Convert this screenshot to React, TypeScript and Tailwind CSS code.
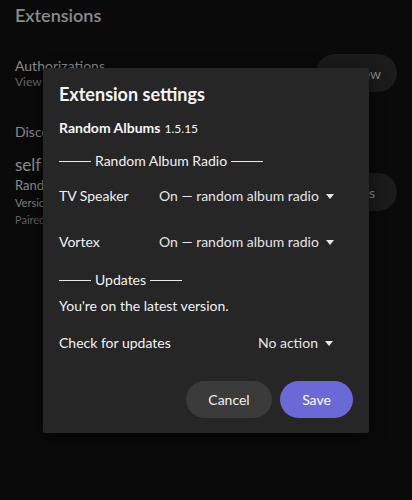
const caret = (
  <svg viewBox="0 0 8 5" className="ml-[7px] h-[5px] w-[8px] shrink-0 text-[#e6e6e6]">
    <path d="M0 0 L8 0 L4 5 Z" fill="currentColor" />
  </svg>
);

function Divider({ label }: { label: string }) {
  return (
    <div className="flex items-center text-[14px] leading-[22px] text-[#f2f2f2]">
      <span className="h-px w-[32px] bg-[#e8e8e8]" />
      <span className="mx-[4px] whitespace-nowrap">{label}</span>
      <span className="h-px w-[32px] bg-[#e8e8e8]" />
    </div>
  );
}

function SettingRow({ label, value, className }: { label: string; value: string; className: string }) {
  return (
    <div className={`flex items-center text-[14px] leading-[22px] ${className}`}>
      <span className="min-w-[100px] whitespace-nowrap text-[#f2f2f2]">{label}</span>
      <span className="ml-auto mr-[20px] flex items-center whitespace-nowrap text-[#e4e4e4]">
        {value}
        {caret}
      </span>
    </div>
  );
}

export default function App() {
  return (
    <div
      className="relative h-[500px] w-[412px] overflow-hidden bg-[#0a0a0a]"
      style={{ fontFamily: "Lato, 'Open Sans', sans-serif" }}
    >
      {/* page under the dialog */}
      <div className="px-[15px] pt-[1px]">
        <h1 className="text-[18px] font-semibold leading-[28px] text-[#8b8b8b]">Extensions</h1>

        <div className="mt-[28px] flex items-start justify-between">
          <div>
            <p className="text-[14px] leading-[17px] text-[#8a8a8a]">Authorizations</p>
            <p className="text-[12px] leading-[16px] text-[#666]">View and manage</p>
          </div>
          <div className="-mt-[3px] flex h-[38px] w-[81px] items-center justify-center gap-2 rounded-full bg-[#1b1b1b] text-[14px] text-[#8a8a8a]">
            <span className="text-[10px]">▲</span>
            View
          </div>
        </div>

        <p className="mt-[31px] text-[14px] leading-[18px] text-[#8a8a8a]">Discover</p>

        <div className="mt-[13px] flex items-start justify-between">
          <div>
            <p className="text-[17px] leading-[22px] text-[#8e8e8e]">self</p>
            <p className="text-[13px] leading-[18px] text-[#8a8a8a]">Random Albums</p>
            <p className="text-[11px] leading-[17px] text-[#808080]">Version 1.5.15</p>
            <p className="text-[11px] leading-[17px] text-[#5f5f5f]">Paired</p>
          </div>
          <div className="mt-[19px] flex h-[38px] w-[81px] items-center justify-end rounded-full bg-[#1b1b1b] pr-[22px] text-[14px] text-[#8a8a8a]">
            Settings
          </div>
        </div>
      </div>

      {/* dialog */}
      <div className="absolute left-[43px] top-[68px] flex h-[365px] w-[326px] flex-col rounded-[2px] bg-[#262626] px-[16px] shadow-[0_4px_16px_rgba(0,0,0,0.6)]">
        <h2 className="mt-[12px] text-[18px] font-bold leading-[28px] text-[#f5f5f5]">Extension settings</h2>
        <p className="mt-[9px] leading-[20px] text-[#f5f5f5]">
          <span className="text-[14px] font-bold">Random Albums</span>{" "}
          <span className="text-[12px]">1.5.15</span>
        </p>
        <div className="mt-[11px]">
          <Divider label="Random Album Radio" />
        </div>
        <SettingRow label="TV Speaker" value="On — random album radio" className="mt-[13px]" />
        <SettingRow label="Vortex" value="On — random album radio" className="mt-[24px]" />
        <div className="mt-[16px]">
          <Divider label="Updates" />
        </div>
        <p className="mt-[4px] text-[14px] leading-[22px] text-[#f2f2f2]">You're on the latest version.</p>
        <SettingRow label="Check for updates" value="No action" className="mt-[15px]" />
        <div className="mt-[27px] flex justify-end gap-[8px]">
          <button className="h-[37px] w-[86px] rounded-full bg-[#3b3b3b] text-[14px] text-[#f0f0f0]">Cancel</button>
          <button className="h-[37px] w-[73px] rounded-full bg-[#6b69d6] text-[14px] text-white">Save</button>
        </div>
      </div>
    </div>
  );
}
